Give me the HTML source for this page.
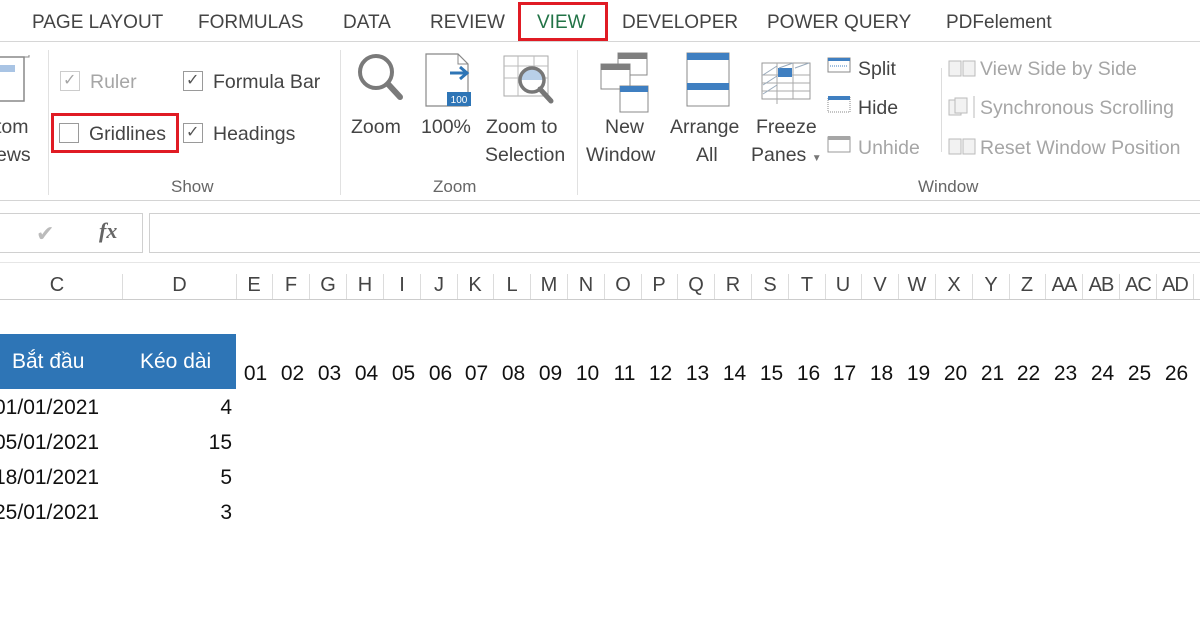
<!DOCTYPE html>
<html><head><meta charset="utf-8">
<style>
*{margin:0;padding:0;box-sizing:border-box}
body{width:1200px;height:630px;overflow:hidden;background:#fff;font-family:"Liberation Sans",sans-serif;position:relative;color:#444}
.a{position:absolute;white-space:nowrap}
.t{font-size:19px;color:#444;top:12px}
.r{font-size:19.5px;color:#444}
.g{color:#a6a6a6}
.c{text-align:center}
.cb{position:absolute;width:20px;height:20px;border:1px solid #9a9a9a;background:#fff}
.cb.d{border-color:#ccc}
.lbl{font-size:17px;color:#666;top:177px}
.col{position:absolute;top:274px;font-size:20px;color:#444;text-align:center;width:37px;border-right:1px solid #dcdcdc;height:25px}
.num{position:absolute;top:362px;font-size:21px;color:#111;width:37px;text-align:center}
.cell{position:absolute;font-size:21px;color:#111}
</style></head><body>
<!-- tabs -->
<div class="a t" style="left:32px">PAGE LAYOUT</div>
<div class="a t" style="left:198px">FORMULAS</div>
<div class="a t" style="left:343px">DATA</div>
<div class="a t" style="left:430px">REVIEW</div>
<div class="a t" style="left:537px;color:#217346">VIEW</div>
<div class="a" style="left:518px;top:2px;width:90px;height:39px;border:3px solid #e01b24"></div>
<div class="a t" style="left:622px">DEVELOPER</div>
<div class="a t" style="left:767px">POWER QUERY</div>
<div class="a t" style="left:946px">PDFelement</div>
<div class="a" style="left:0;top:41px;width:1200px;height:1px;background:#d6d6d6"></div>
<div class="a" style="left:518px;top:38px;width:90px;height:3px;background:#e01b24"></div>

<!-- custom views remnant -->
<svg class="a" style="left:0;top:55px" width="30" height="50"><rect x="-5" y="2" width="29" height="44" fill="none" stroke="#888" stroke-width="1.5"/><rect x="-5" y="10" width="20" height="7" fill="#a9c4e4"/><rect x="-5" y="-2" width="34" height="4" fill="none" stroke="#888"/></svg>
<div class="a r" style="left:-4px;top:116px">tom</div>
<div class="a r" style="left:-4px;top:144px">ews</div>
<div class="a" style="left:48px;top:50px;width:1px;height:145px;background:#e1e1e1"></div>

<!-- show group -->
<div class="cb d" style="left:60px;top:71px"></div><div class="a g" style="left:63px;top:70px;font-size:16px">✓</div>
<div class="a r g" style="left:90px;top:71px">Ruler</div>
<div class="cb" style="left:183px;top:71px"></div><div class="a" style="left:186px;top:70px;font-size:16px;color:#555">✓</div>
<div class="a r" style="left:213px;top:71px">Formula Bar</div>
<div class="cb" style="left:59px;top:123px"></div>
<div class="a r" style="left:89px;top:123px">Gridlines</div>
<div class="a" style="left:51px;top:113px;width:128px;height:40px;border:3px solid #e01b24"></div>
<div class="cb" style="left:183px;top:123px"></div><div class="a" style="left:186px;top:122px;font-size:16px;color:#555">✓</div>
<div class="a r" style="left:213px;top:123px">Headings</div>
<div class="a lbl" style="left:171px">Show</div>
<div class="a" style="left:340px;top:50px;width:1px;height:145px;background:#e1e1e1"></div>

<!-- zoom group -->
<svg class="a" style="left:350px;top:50px" width="220" height="60">
<circle cx="26" cy="22" r="16" fill="none" stroke="#7a7a7a" stroke-width="4"/>
<line x1="38" y1="34" x2="50" y2="47" stroke="#7a7a7a" stroke-width="6" stroke-linecap="round"/>
<path d="M76 4 H108 L118 14 V56 H76 Z" fill="#fff" stroke="#888" stroke-width="1.2"/>
<path d="M108 4 V14 H118" fill="none" stroke="#888"/>
<line x1="100" y1="23" x2="115" y2="23" stroke="#2e75b6" stroke-width="3"/>
<path d="M110 17 L117 23 L110 29" fill="none" stroke="#2e75b6" stroke-width="3"/>
<rect x="97" y="42" width="24" height="14" fill="#2e75b6"/>
<text x="109" y="53" font-size="10" fill="#fff" text-anchor="middle" font-family="Liberation Sans">100</text>
<rect x="154" y="6" width="44" height="40" fill="#fff" stroke="#aaa"/>
<line x1="154" y1="16" x2="198" y2="16" stroke="#bbb"/><line x1="154" y1="28" x2="198" y2="28" stroke="#bbb"/>
<line x1="168" y1="6" x2="168" y2="46" stroke="#bbb"/><line x1="184" y1="6" x2="184" y2="16" stroke="#bbb"/>
<path d="M170 30 A12 12 0 0 1 194 30 Z" fill="#b8cfe8"/>
<circle cx="182" cy="30" r="12" fill="none" stroke="#777" stroke-width="3.5"/>
<line x1="190" y1="39" x2="201" y2="51" stroke="#777" stroke-width="5" stroke-linecap="round"/>
</svg>
<div class="a r" style="left:351px;top:116px">Zoom</div>
<div class="a r" style="left:421px;top:116px">100%</div>
<div class="a r" style="left:486px;top:116px">Zoom to</div>
<div class="a r" style="left:485px;top:144px">Selection</div>
<div class="a lbl" style="left:433px">Zoom</div>
<div class="a" style="left:577px;top:50px;width:1px;height:145px;background:#e1e1e1"></div>

<!-- window group -->
<svg class="a" style="left:595px;top:48px" width="260" height="110">
<rect x="23" y="5" width="29" height="22" fill="#fff" stroke="#888"/><rect x="23" y="5" width="29" height="6" fill="#7f7f7f"/>
<rect x="6" y="16" width="29" height="25" fill="#fff" stroke="#888"/><rect x="6" y="16" width="29" height="6" fill="#7f7f7f"/>
<rect x="25" y="38" width="28" height="26" fill="#fff" stroke="#888"/><rect x="25" y="38" width="28" height="6" fill="#3f7fc1"/>
<rect x="92" y="5" width="42" height="53" fill="#fff" stroke="#888"/><rect x="92" y="5" width="42" height="7" fill="#3f7fc1"/><rect x="92" y="35" width="42" height="7" fill="#3f7fc1"/>
<rect x="167" y="15" width="48" height="36" fill="#fff" stroke="#999"/>
<line x1="167" y1="27" x2="215" y2="27" stroke="#aaa"/><line x1="167" y1="35" x2="215" y2="35" stroke="#aaa"/><line x1="167" y1="43" x2="215" y2="43" stroke="#aaa"/>
<line x1="182" y1="15" x2="182" y2="56" stroke="#aaa"/><line x1="198" y1="15" x2="198" y2="51" stroke="#aaa"/>
<rect x="183" y="20" width="14" height="9" fill="#3f7fc1"/>
<path d="M168 27 L182 18 M168 37 L182 28 M168 46 L182 37 M184 20 L198 15 M200 20 L214 15" stroke="#9ab" />
<rect x="233" y="10" width="22" height="14" fill="#fff" stroke="#888"/><rect x="233" y="10" width="22" height="3" fill="#3f7fc1"/><line x1="235" y1="18" x2="253" y2="18" stroke="#3f7fc1" stroke-dasharray="1 1"/>
<rect x="233" y="49" width="22" height="15" fill="#fff" stroke="#888" stroke-dasharray="1 1"/><rect x="233" y="48" width="22" height="4" fill="#3f7fc1"/>
<rect x="233" y="89" width="22" height="15" fill="#fff" stroke="#999"/><rect x="233" y="88" width="22" height="4" fill="#a6a6a6"/>
</svg>
<div class="a r" style="left:605px;top:116px">New</div>
<div class="a r" style="left:586px;top:144px">Window</div>
<div class="a r" style="left:670px;top:116px">Arrange</div>
<div class="a r" style="left:696px;top:144px">All</div>
<div class="a r" style="left:756px;top:116px">Freeze</div>
<div class="a r" style="left:751px;top:144px">Panes <span style="font-size:10px;color:#777">▼</span></div>
<div class="a r" style="left:858px;top:58px">Split</div>
<div class="a r" style="left:858px;top:97px">Hide</div>
<div class="a r g" style="left:858px;top:137px">Unhide</div>
<div class="a" style="left:941px;top:68px;width:1px;height:84px;background:#ddd"></div>
<svg class="a" style="left:947px;top:58px" width="32" height="100">
<rect x="2" y="3" width="12" height="15" fill="#f2f2f2" stroke="#bbb"/><rect x="16" y="3" width="12" height="15" fill="#f2f2f2" stroke="#bbb"/>
<rect x="2" y="42" width="12" height="15" fill="#f2f2f2" stroke="#bbb"/><rect x="8" y="40" width="12" height="15" fill="#f2f2f2" stroke="#bbb"/><line x1="27" y1="38" x2="27" y2="60" stroke="#bbb"/>
<rect x="2" y="81" width="12" height="15" fill="#f2f2f2" stroke="#bbb"/><rect x="16" y="81" width="12" height="15" fill="#f2f2f2" stroke="#bbb"/>
</svg>
<div class="a r g" style="left:980px;top:58px">View Side by Side</div>
<div class="a r g" style="left:980px;top:97px">Synchronous Scrolling</div>
<div class="a r g" style="left:980px;top:137px">Reset Window Position</div>
<div class="a lbl" style="left:918px">Window</div>

<div class="a" style="left:0;top:200px;width:1200px;height:1px;background:#d4d4d4"></div>

<!-- formula bar -->
<div class="a" style="left:-2px;top:213px;width:145px;height:40px;border:1px solid #d0d0d0"></div>
<div class="a" style="left:36px;top:221px;font-size:22px;color:#bbb">✔</div>
<div class="a" style="left:99px;top:218px;font-size:22px;color:#666;font-family:'Liberation Serif',serif;font-style:italic;font-weight:bold">fx</div>
<div class="a" style="left:149px;top:213px;width:1060px;height:40px;border:1px solid #d0d0d0"></div>

<!-- column headers -->
<div class="a" style="left:0;top:262px;width:1200px;height:1px;background:#e6e6e6"></div>
<div class="col" style="left:-8px;width:131px">C</div>
<div class="col" style="left:123px;width:114px">D</div>
<div class="a" style="left:0;top:299px;width:1200px;height:1px;background:#ccc"></div>

<!-- table -->
<div class="a" style="left:0;top:334px;width:236px;height:55px;background:#2e75b6"></div>
<div class="cell" style="left:12px;top:350px;color:#fff">Bắt đầu</div>
<div class="cell" style="left:140px;top:350px;color:#fff">Kéo dài</div>
<div class="cell" style="left:-6px;top:396px">01/01/2021</div>
<div class="cell" style="left:-6px;top:431px">05/01/2021</div>
<div class="cell" style="left:-6px;top:466px">18/01/2021</div>
<div class="cell" style="left:-6px;top:501px">25/01/2021</div>
<div class="cell" style="left:160px;top:396px;width:72px;text-align:right">4</div>
<div class="cell" style="left:160px;top:431px;width:72px;text-align:right">15</div>
<div class="cell" style="left:160px;top:466px;width:72px;text-align:right">5</div>
<div class="cell" style="left:160px;top:501px;width:72px;text-align:right">3</div>

<div class="col" style="left:236px">E</div><div class="col" style="left:273px">F</div><div class="col" style="left:310px">G</div><div class="col" style="left:347px">H</div><div class="col" style="left:384px">I</div><div class="col" style="left:421px">J</div><div class="col" style="left:457px">K</div><div class="col" style="left:494px">L</div><div class="col" style="left:531px">M</div><div class="col" style="left:568px">N</div><div class="col" style="left:605px">O</div><div class="col" style="left:641px">P</div><div class="col" style="left:678px">Q</div><div class="col" style="left:715px">R</div><div class="col" style="left:752px">S</div><div class="col" style="left:789px">T</div><div class="col" style="left:825px">U</div><div class="col" style="left:862px">V</div><div class="col" style="left:899px">W</div><div class="col" style="left:936px">X</div><div class="col" style="left:973px">Y</div><div class="col" style="left:1009px">Z</div><div class="col" style="left:1046px;letter-spacing:-1px">AA</div><div class="col" style="left:1083px;letter-spacing:-1px">AB</div><div class="col" style="left:1120px;letter-spacing:-1px">AC</div><div class="col" style="left:1157px;letter-spacing:-1px">AD</div>

<div class="num" style="left:237px">01</div><div class="num" style="left:274px">02</div><div class="num" style="left:311px">03</div><div class="num" style="left:348px">04</div><div class="num" style="left:385px">05</div><div class="num" style="left:422px">06</div><div class="num" style="left:458px">07</div><div class="num" style="left:495px">08</div><div class="num" style="left:532px">09</div><div class="num" style="left:569px">10</div><div class="num" style="left:606px">11</div><div class="num" style="left:642px">12</div><div class="num" style="left:679px">13</div><div class="num" style="left:716px">14</div><div class="num" style="left:753px">15</div><div class="num" style="left:790px">16</div><div class="num" style="left:826px">17</div><div class="num" style="left:863px">18</div><div class="num" style="left:900px">19</div><div class="num" style="left:937px">20</div><div class="num" style="left:974px">21</div><div class="num" style="left:1010px">22</div><div class="num" style="left:1047px">23</div><div class="num" style="left:1084px">24</div><div class="num" style="left:1121px">25</div><div class="num" style="left:1158px">26</div>
</body></html>
